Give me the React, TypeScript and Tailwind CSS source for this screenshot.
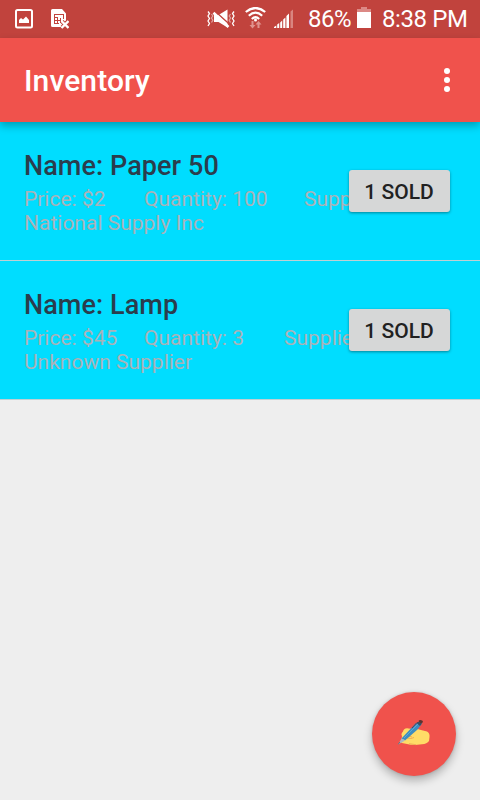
type Item = {
  name: string;
  price: string;
  quantity: string;
  supplier: string;
  quantityWidth: string;
};

const items: Item[] = [
  { name: "Paper 50", price: "$2", quantity: "100", supplier: "National Supply Inc", quantityWidth: "w-[160px]" },
  { name: "Lamp", price: "$45", quantity: "3", supplier: "Unknown Supplier", quantityWidth: "w-[140px]" },
];

function PictureIcon() {
  return (
    <svg className="mb-px ml-[15px] h-5 w-[18px]" viewBox="0 0 18 20">
      <rect x="1" y="1" width="16" height="17.500" rx="1.500" fill="none" stroke="#fff" strokeWidth="2" />
      <path d="M4 14v-3l2-2 2 1.500 3-3 3 3.500v3z" fill="#fff" />
    </svg>
  );
}

function SimErrorIcon() {
  return (
    <svg className="mb-px ml-[18px] h-5 w-[18px]" viewBox="0 0 18 20">
      <path d="M1.500 0H11l4 4.500v7L12.500 14l-1.500 1 1 3H1.500Q0 18 0 16.500v-15Q0 0 1.500 0z" fill="#fff" />
      <g fill="none" stroke="#c1433d" strokeWidth="1">
        <path d="M3 5.500h9.500M3 14.500h5M3.500 5v10M6.500 8v7M9.500 9v5M12.500 5v5M3 8.500h3M3 11.500h7" />
      </g>
      <path d="M11 12.500l6 6M17 12.500l-6 6" stroke="#c1433d" strokeWidth="4" />
      <path d="M10.500 12l7 7M17.500 12l-7 7" stroke="#fff" strokeWidth="2.400" />
    </svg>
  );
}

function MuteIcon() {
  return (
    <svg className="h-5 w-[30px]" viewBox="0 0 30 20">
      <g fill="none" stroke="#fff" strokeWidth="1.300">
        <path d="M2 2.500l1.500 2L2 7l1.500 2.500L2 12l1.500 2.500L2 17" />
        <path d="M5.500 5L6.800 7 5.500 9l1.300 2.300-1.300 2.200" opacity="0.500" />
        <path d="M28 2.500l-1.500 2L28 7l-1.500 2.500L28 12l-1.500 2.500L28 17" />
        <path d="M24.500 5l-1.300 2 1.300 2-1.300 2.300 1.300 2.200" opacity="0.500" />
      </g>
      <path d="M8 6h4.500L21.500.5v18L12.500 13H8z" fill="#fff" />
      <path d="M8.500 1.800L23.500 15.200" stroke="#c1433d" strokeWidth="1.400" />
      <path d="M7.500 3.800L22.500 18" stroke="#fff" strokeWidth="2.600" />
    </svg>
  );
}

function WifiIcon() {
  return (
    <svg className="mb-[3px] ml-[9px] h-[22px] w-[21px]" viewBox="0 0 21 22">
      <g fill="none" stroke="#fff" strokeWidth="2.200">
        <path d="M.8 5Q10.500-3 20.200 5" />
        <path d="M3.800 8.700Q10.500 2.700 17.200 8.700" />
        <path d="M6.800 12Q10.500 8.500 14.200 12" />
      </g>
      <circle cx="10.500" cy="13" r="1.500" fill="#fff" />
      <path d="M6.500 14h2v4h2l-3 3.500-3-3.500h2zM12.500 21v-3.500h-2L13.500 14l3 3.500h-2V21z" fill="#df928d" />
    </svg>
  );
}

function SignalIcon() {
  return (
    <svg className="ml-[8px] h-5 w-5" viewBox="0 0 20 20">
      <path
        d="M0 19v-1l2.300-1.500V19zM3.200 19v-3.500l2-1.500v5zM6.200 19v-5.500l2-2V19zM9.200 19v-8.500l2.200-2V19zM12.400 19V7l2.600-2.500V19z"
        fill="#fff"
      />
      <path d="M16.500 2.500L19 .5V19h-2.500z" fill="#d98580" />
    </svg>
  );
}

function BatteryIcon() {
  return (
    <svg className="mb-[4px] ml-[6px] h-[21px] w-[14px]" viewBox="0 0 14 21">
      <path d="M0 2h4V0h6v2h4v3H0z" fill="#dc8985" />
      <rect y="5" width="14" height="16" fill="#fff" />
    </svg>
  );
}

function WritingHand() {
  return (
    <svg className="h-8 w-8" viewBox="0 0 32 32">
      <path
        d="M5 13.500Q5.500 10.500 9 10.300L14 11Q19 10.500 22 11.700L29 13.500Q32 15 31.500 19L31 23Q29 26 24 26.200L17 27Q12 27 9 26L4 25Q2 24 3.500 22L4 18Q2.500 16 5 13.500z"
        fill="#ffdc67"
      />
      <path d="M9 20l4 .5 3-1M11 18l3 1M18 26.700l-7-1" stroke="#eba352" strokeWidth="0.800" fill="none" />
      <path d="M3.500 20.500l14-15L23 3.500l1 2-4.500 6L7 22.500z" fill="#3e8dc0" />
      <path d="M6 20l14-14" stroke="#59a9d6" strokeWidth="1" />
      <path d="M14 10l5-5.500 2 .5" stroke="#554354" strokeWidth="1" fill="none" />
      <path d="M19 5.500l3 2.500 1.500-2-2.500-2.500z" fill="#34506a" />
      <path d="M20.500 3Q22 1 24.500 2.700L25 4l-2 2z" fill="#5d322e" />
      <path d="M3.500 20.500L0 26.500l5.500-3L7 22z" fill="#adb8c0" />
      <path d="M0 26.500l2-2.500" stroke="#62717c" />
    </svg>
  );
}

function InventoryRow({ item }: { item: Item }) {
  return (
    <li className="grid h-[139px] grid-cols-[minmax(0,1fr)] border-b border-[#bfd0d3] bg-[#00ddff]">
      <div className="col-start-1 row-start-1 pl-6 pt-7">
        <h2 className="text-[27px] font-medium leading-8 tracking-[0.08px] text-[#2b3d4d]">Name: {item.name}</h2>
        <div className="mt-[5px] text-[21px] leading-6 text-[#aab2b8]">
          <p className="flex whitespace-nowrap">
            <span className="w-[120px] shrink-0">Price: {item.price}</span>
            <span className={`shrink-0 ${item.quantityWidth}`}>Quantity: {item.quantity}</span>
            <span>Supplier:</span>
          </p>
          <p>{item.supplier}</p>
        </div>
      </div>
      <button className="z-10 col-start-1 row-start-1 mr-[30px] mt-12 h-[42px] w-[101px] justify-self-end rounded-[3px] bg-[#d6d7d7] pr-px pt-px text-[21px] font-medium leading-6 text-[#212121] shadow-[0_1px_3px_rgba(0,0,0,0.4)]">
        1 SOLD
      </button>
    </li>
  );
}

export default function App() {
  return (
    <div className="flex h-[800px] w-[480px] flex-col overflow-hidden bg-[#eeeeee] font-[Roboto,sans-serif]">
      <div className="flex h-[38px] shrink-0 items-center bg-[#c1433d] text-white">
        <PictureIcon />
        <SimErrorIcon />
        <div className="ml-auto flex items-center pr-[12px]">
          <MuteIcon />
          <WifiIcon />
          <SignalIcon />
          <span className="ml-[14px] w-[43px] whitespace-nowrap text-[24px] leading-7 tracking-[-0.5px]">86%</span>
          <BatteryIcon />
          <span className="ml-[11px] w-[86px] whitespace-nowrap text-[24px] leading-7 tracking-[-0.4px]">8:38 PM</span>
        </div>
      </div>
      <header className="z-20 flex h-[84px] shrink-0 items-center justify-between bg-[#f0524c] pl-6 pr-[30px] shadow-[0_4px_8px_rgba(0,0,0,0.28)]">
        <h1 className="pt-[2px] text-[30px] font-medium leading-9 tracking-[0.1px] text-white">Inventory</h1>
        <button aria-label="More options" className="flex flex-col gap-[3px]">
          <span className="size-[6px] rounded-full bg-white" />
          <span className="size-[6px] rounded-full bg-white" />
          <span className="size-[6px] rounded-full bg-white" />
        </button>
      </header>
      <ul>
        {items.map((item) => (
          <InventoryRow key={item.name} item={item} />
        ))}
      </ul>
      <button
        aria-label="Add item"
        className="mb-6 mr-6 mt-auto flex size-[84px] shrink-0 items-center justify-center self-end rounded-full bg-[#f0524c] shadow-[0_5px_9px_rgba(0,0,0,0.25),0_0_3px_rgba(0,0,0,0.15)]"
      >
        <WritingHand />
      </button>
    </div>
  );
}
